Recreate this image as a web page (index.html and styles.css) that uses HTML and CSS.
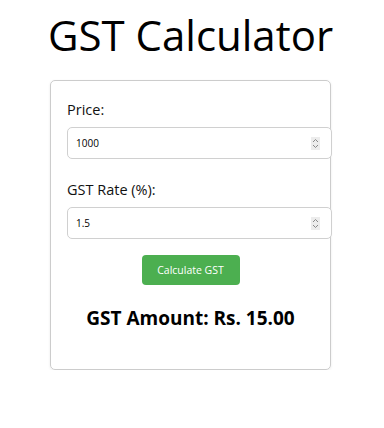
FILE: index.html
```html
<!DOCTYPE html>
<html lang="en">
<head>
<meta charset="utf-8">
<title>GST Calculator</title>
<link rel="stylesheet" href="styles.css">
</head>
<body>
<div class="app">
  <h1 class="title">GST Calculator</h1>
  <div class="card">
    <label class="label" for="price">Price:</label>
    <div class="input-wrap">
      <input class="num" id="price" type="number" value="1000">
      <span class="spin"><svg width="9" height="13" viewBox="0 0 9 13"><path d="M2 5 L4.5 2.5 L7 5 M2 8 L4.5 10.5 L7 8" fill="none" stroke="#8a8a8a" stroke-width="1"/></svg></span>
    </div>
    <label class="label" for="rate">GST Rate (%):</label>
    <div class="input-wrap">
      <input class="num" id="rate" type="number" value="1.5">
      <span class="spin"><svg width="9" height="13" viewBox="0 0 9 13"><path d="M2 5 L4.5 2.5 L7 5 M2 8 L4.5 10.5 L7 8" fill="none" stroke="#8a8a8a" stroke-width="1"/></svg></span>
    </div>
    <div class="actions">
      <button class="btn" type="button">Calculate GST</button>
    </div>
    <h3 class="result">GST Amount: Rs. 15.00</h3>
  </div>
</div>
</body>
</html>
```
FILE: styles.css
```css
html, body {
  margin: 0;
  padding: 0;
  background: #fff;
}
body {
  font-family: "Segoe UI", "Open Sans", "Noto Sans", sans-serif;
  color: #000;
}
.app {
  width: 381px;
  display: flex;
  flex-direction: column;
  align-items: center;
}
.title {
  margin: 0;
  padding-top: 8px;
  font-size: 42px;
  font-weight: 400;
  line-height: 54px;
  height: 54px;
}
.card {
  margin-top: 18px;
  width: 247px;
  padding: 18px 16px 16px;
  border: 1px solid #ccc;
  border-radius: 5px;
  box-shadow: 0 1px 3px rgba(0,0,0,0.08);
}
.label {
  display: block;
  font-size: 14.5px;
  line-height: 21px;
  margin-bottom: 7px;
  color: #111;
}
.input-wrap {
  position: relative;
  width: 100%;
  margin-bottom: 20px;
}
.num {
  display: block;
  width: 100%;
  padding: 8px;
  border: 1px solid #d0d0d0;
  border-radius: 5px;
  font-family: "Segoe UI", "Open Sans", "Noto Sans", sans-serif;
  font-size: 10px;
  line-height: 14px;
  height: 14px;
  color: #000;
  background: #fff;
  -moz-appearance: textfield;
}
.num::-webkit-inner-spin-button,
.num::-webkit-outer-spin-button {
  -webkit-appearance: none;
  margin: 0;
}
.spin {
  position: absolute;
  left: 244px;
  top: 10px;
  width: 9px;
  height: 13px;
  background: #ececec;
  display: flex;
}
.actions {
  display: flex;
  justify-content: center;
  margin-top: -4px;
}
.btn {
  width: 98px;
  height: 30px;
  border: none;
  border-radius: 4px;
  background: #4caf50;
  color: #fff;
  font-family: "Segoe UI", "Open Sans", "Noto Sans", sans-serif;
  font-size: 10.5px;
  padding: 0;
}
.result {
  margin: 20px 0 22px;
  text-align: center;
  font-size: 19px;
  line-height: 26px;
  font-weight: 700;
}
```
